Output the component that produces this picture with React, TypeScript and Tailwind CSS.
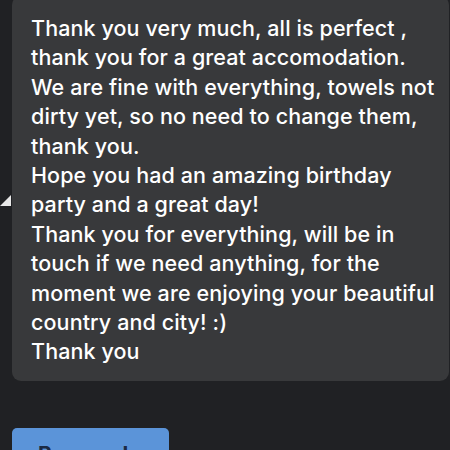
import React from "react";

const lines = [
  "Thank you very much, all is perfect ,",
  "thank you for a great accomodation.",
  "We are fine with everything, towels not",
  "dirty yet, so no need to change them,",
  "thank you.",
  "Hope you had an amazing birthday",
  "party and a great day!",
  "Thank you for everything, will be in",
  "touch if we need anything, for the",
  "moment we are enjoying your beautiful",
  "country and city! :)",
  "Thank you",
];

export default function App() {
  return (
    <div
      className="w-[450px] h-[450px] overflow-hidden bg-[#202124] relative"
      style={{ fontFamily: "Inter, 'Noto Sans', sans-serif" }}
    >
      <div className="relative ml-[12px] mt-[-4px] w-[437px] h-[385px] rounded-[9px] bg-[#38393b] pl-[19px] pt-[18px]">
        <div className="text-[21.5px] font-medium leading-[29.4px] text-white tracking-[0.1px]">
          {lines.map((l, i) => (
            <div key={i} className="whitespace-nowrap">
              {l}
            </div>
          ))}
        </div>
      </div>
      <svg
        className="absolute left-0 top-[195px]"
        width="12"
        height="11"
        viewBox="0 0 12 11"
      >
        <polygon points="0,11 11,0 11,11" fill="#e8e8e8" />
      </svg>
      <div className="mt-[47px] ml-[12px] w-[157px] h-[40px] rounded-[5px] bg-[#5b94d9] pl-[26px] pt-[11px]">
        <span className="text-[21px] font-bold text-[#1b2a44]">Responder</span>
      </div>
    </div>
  );
}
